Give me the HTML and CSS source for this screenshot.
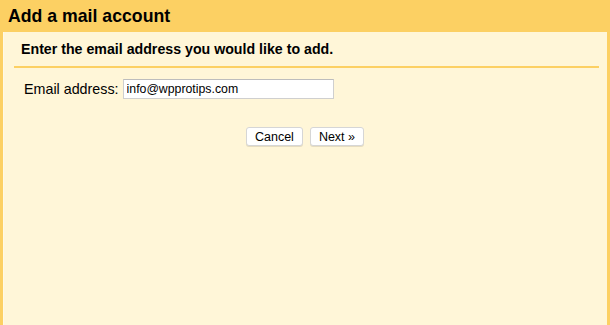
FILE: index.html
```html
<!DOCTYPE html>
<html>
<head>
<meta charset="utf-8">
<link rel="stylesheet" href="styles.css">
</head>
<body>
<div class="frame">
  <div class="header">Add a mail account</div>
  <div class="body">
    <div class="subtitle">Enter the email address you would like to add.</div>
    <div class="field-row">
      <label class="label">Email address:</label>
      <input class="input" type="text" value="info@wpprotips.com">
    </div>
    <div class="buttons">
      <button class="btn">Cancel</button>
      <button class="btn">Next »</button>
    </div>
  </div>
</div>
</body>
</html>
```

FILE: styles.css
```css
html, body {
  margin: 0;
  padding: 0;
  width: 610px;
  height: 325px;
  overflow: hidden;
  font-family: "Liberation Sans", Arial, sans-serif;
}
.frame {
  width: 610px;
  height: 325px;
  box-sizing: border-box;
  background: #fcd063;
  padding: 0 3px 0 3px;
  display: flex;
  flex-direction: column;
}
.header {
  height: 32px;
  box-sizing: border-box;
  padding: 6px 0 0 5px;
  font-size: 17.7px;
  font-weight: bold;
  color: #000;
  flex: none;
}
.body {
  flex: 1;
  background: #fff6d8;
  border-left: 1px solid #fff9e6;
  padding: 0 8px 0 10px;
}
.subtitle {
  font-size: 14.2px;
  font-weight: bold;
  padding: 9px 0 0 7px;
  box-sizing: border-box;
  border-bottom: 2px solid #fcd063;
  height: 36px;
}
.field-row {
  display: flex;
  align-items: center;
  margin-top: 11px;
  padding-left: 10px;
}
.label {
  font-size: 14.3px;
  margin-right: 4px;
}
.input {
  width: 211px;
  height: 20px;
  box-sizing: border-box;
  border: 1px solid #cfcfcf;
  border-top-color: #bdbdbd;
  padding: 1px 3px;
  font-family: "Liberation Sans", Arial, sans-serif;
  font-size: 12.3px;
  background: #fff;
  color: #000;
  outline: none;
}
.buttons {
  display: flex;
  justify-content: center;
  gap: 7px;
  margin-top: 28px;
  padding-right: 3px;
}
.btn {
  height: 19px;
  box-sizing: border-box;
  padding: 0 8px;
  border: 1px solid #d6d6d6;
  border-radius: 3px;
  background: #fff;
  font-family: "Liberation Sans", Arial, sans-serif;
  font-size: 12.5px;
  color: #000;
  box-shadow: 0 1px 0 #e6dcc0;
}
```
